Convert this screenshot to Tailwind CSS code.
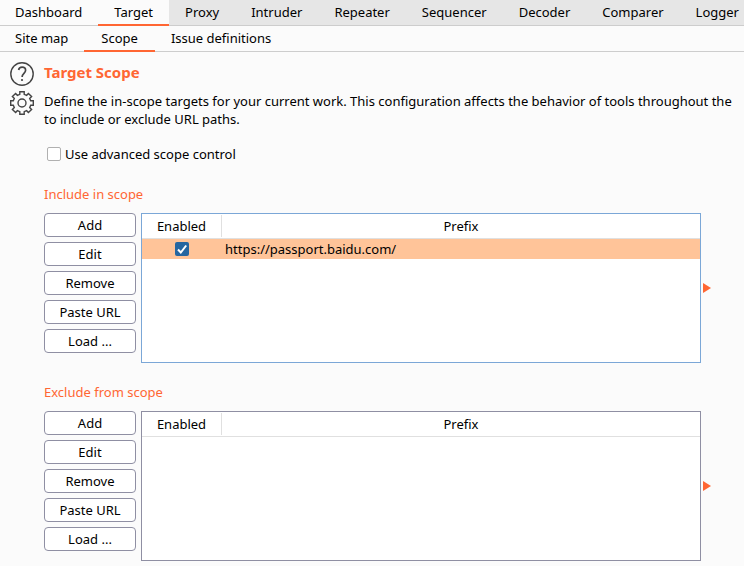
<!DOCTYPE html>
<html lang="en">
<head>
<meta charset="utf-8">
<meta name="viewport" content="width=device-width, initial-scale=1">
<title>Target Scope</title>
<script src="https://cdn.jsdelivr.net/npm/@tailwindcss/browser@4"></script>
</head>
<body class="min-h-screen overflow-x-hidden bg-[#fbfbfb] font-['Noto_Sans','Open_Sans',sans-serif] text-[13px] leading-[18px] text-black">
<nav aria-label="Tools" class="flex h-[26px] overflow-hidden whitespace-nowrap bg-[#e6e6e6] shadow-[inset_0_-1px_#cdcdcd]">
  <a href="#" class="border-b border-[#cdcdcd] bg-[#fbfbfb] pt-[3px] pr-4 pl-[15px]">Dashboard</a>
  <a href="#" aria-current="page" class="border-b-2 border-[#ff6633] bg-[#fbfbfb] px-4 pt-[3px]">Target</a>
  <a href="#" class="px-4 pt-[3px]">Proxy</a>
  <a href="#" class="px-4 pt-[3px]">Intruder</a>
  <a href="#" class="px-4 pt-[3px]">Repeater</a>
  <a href="#" class="px-4 pt-[3px]">Sequencer</a>
  <a href="#" class="px-4 pt-[3px]">Decoder</a>
  <a href="#" class="px-4 pt-[3px]">Comparer</a>
  <a href="#" class="px-4 pt-[3px]">Logger</a>
</nav>
<nav aria-label="Target" class="flex h-[26px] whitespace-nowrap shadow-[inset_0_-1px_#cdcdcd]">
  <a href="#" class="pt-[3px] pr-4 pl-[15px]">Site map</a>
  <a href="#" aria-current="page" class="border-b-2 border-[#ff6633] px-[17px] pt-[3px]">Scope</a>
  <a href="#" class="px-4 pt-[3px]">Issue definitions</a>
</nav>
<main class="flex gap-2.5 pt-2.5 pl-2.5">
  <div class="flex w-6 shrink-0 flex-col gap-[5px]">
    <button type="button" aria-label="Help" class="size-6">
      <svg viewBox="0 0 24 24" class="size-6" fill="none" stroke="#444" stroke-width="1.4"><circle cx="12" cy="12" r="11.2"/><path d="M8.600 8C8.900 6.200 10.200 5.200 12.100 5.200c2.100 0 3.500 1.200 3.500 3.100 0 3-3.500 3.200-3.500 6.700" stroke-width="1.700"/><circle cx="12" cy="18" r="1.100" fill="#444" stroke="none"/></svg>
    </button>
    <button type="button" aria-label="Settings" class="size-6">
      <svg viewBox="0 0 24 24" class="size-6" fill="none" stroke="#444" stroke-width="1.400"><circle cx="12" cy="12" r="4"/><path d="M9.800 3.300V.700h4.400v2.600L16.600 4.300 18.400 2.400 21.600 5.600 19.700 7.400 20.700 9.800h2.600v4.400h-2.600L19.700 16.600 21.600 18.400 18.400 21.600 16.600 19.700 14.200 20.700v2.600H9.800v-2.600L7.400 19.700 5.600 21.600 2.400 18.400 4.300 16.600 3.300 14.200H.700V9.800h2.600L4.300 7.400 2.400 5.600 5.600 2.400 7.400 4.300z"/></svg>
    </button>
  </div>
  <div class="min-w-0 flex-1">
    <h1 class="pt-px text-[15px] font-bold text-[#ff6633]">Target Scope</h1>
    <p class="mt-[11px] whitespace-nowrap">Define the in-scope targets for your current work. This configuration affects the behavior of tools throughout the<br>to include or exclude URL paths.</p>
    <label class="mt-[17px] ml-[3px] flex w-fit items-center gap-1"><input type="checkbox" class="size-3.5 appearance-none rounded-xs border border-[#b0b0b0] bg-white">Use advanced scope control</label>

    <section class="mt-[22px] pr-[33px]">
      <h2 class="text-[#ff6633]">Include in scope</h2>
      <div class="mt-2.5 flex">
        <div class="mr-[5px] flex w-[92px] shrink-0 flex-col gap-[5px]">
          <button type="button" class="h-6 rounded-sm border border-[#8f8fa3] bg-white">Add</button>
          <button type="button" class="h-6 rounded-sm border border-[#8f8fa3] bg-white">Edit</button>
          <button type="button" class="h-6 rounded-sm border border-[#8f8fa3] bg-white">Remove</button>
          <button type="button" class="h-6 rounded-sm border border-[#8f8fa3] bg-white">Paste URL</button>
          <button type="button" class="h-6 rounded-sm border border-[#8f8fa3] bg-white">Load ...</button>
        </div>
        <div class="h-[150px] min-w-0 flex-1 border border-[#7ba7d7] bg-white">
          <table class="w-full table-fixed border-separate border-spacing-0">
            <thead><tr class="h-[25px]">
              <th class="w-20 border-b border-[#e0e0e0] p-0 font-normal"><div class="border-r border-[#e0e0e0] leading-[22px]">Enabled</div></th>
              <th class="border-b border-[#e0e0e0] p-0 font-normal">Prefix</th>
            </tr></thead>
            <tbody><tr class="h-5 bg-[#ffc499]">
              <td class="p-0"><span class="relative mx-auto block size-3.5"><input type="checkbox" checked aria-label="Enabled" class="block size-3.5 appearance-none rounded-xs bg-[#2666a0]"><svg viewBox="0 0 14 14" class="pointer-events-none absolute inset-0 size-3.5" fill="none" stroke="#fff" stroke-width="2"><path d="M3 7.500 5.800 10.500 11.200 3.500"/></svg></span></td>
              <td class="p-0 pl-[3px]">https://passport.baidu.com/</td>
            </tr></tbody>
          </table>
        </div>
        <button type="button" aria-label="Expand include list" class="ml-0.5 self-center"><svg viewBox="0 0 8 10" class="h-2.5 w-2" fill="#ff6633"><path d="M0 0 8 5 0 10z"/></svg></button>
      </div>
    </section>

    <section class="mt-5 pr-[33px]">
      <h2 class="text-[#ff6633]">Exclude from scope</h2>
      <div class="mt-2.5 flex">
        <div class="mr-[5px] flex w-[92px] shrink-0 flex-col gap-[5px]">
          <button type="button" class="h-6 rounded-sm border border-[#8f8fa3] bg-white">Add</button>
          <button type="button" class="h-6 rounded-sm border border-[#8f8fa3] bg-white">Edit</button>
          <button type="button" class="h-6 rounded-sm border border-[#8f8fa3] bg-white">Remove</button>
          <button type="button" class="h-6 rounded-sm border border-[#8f8fa3] bg-white">Paste URL</button>
          <button type="button" class="h-6 rounded-sm border border-[#8f8fa3] bg-white">Load ...</button>
        </div>
        <div class="h-[150px] min-w-0 flex-1 border border-[#8f8fa3] bg-white">
          <table class="w-full table-fixed border-separate border-spacing-0">
            <thead><tr class="h-[25px]">
              <th class="w-20 border-b border-[#e0e0e0] p-0 font-normal"><div class="border-r border-[#e0e0e0] leading-[22px]">Enabled</div></th>
              <th class="border-b border-[#e0e0e0] p-0 font-normal">Prefix</th>
            </tr></thead>
          </table>
        </div>
        <button type="button" aria-label="Expand exclude list" class="ml-0.5 self-center"><svg viewBox="0 0 8 10" class="h-2.5 w-2" fill="#ff6633"><path d="M0 0 8 5 0 10z"/></svg></button>
      </div>
    </section>
  </div>
</main>
</body>
</html>
